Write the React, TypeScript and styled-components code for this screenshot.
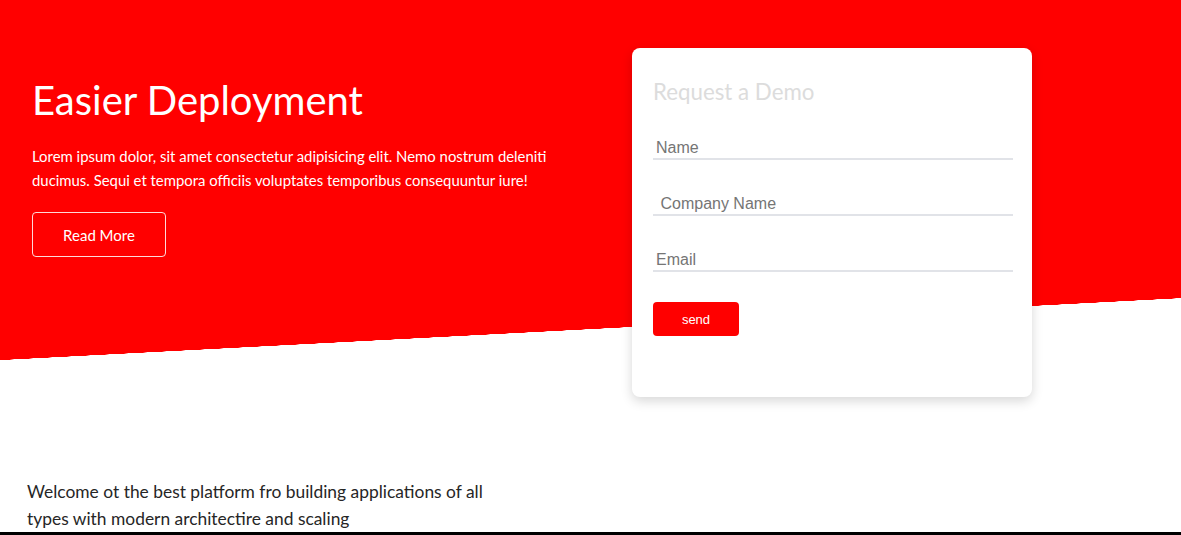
import * as React from 'react'
import styled, { createGlobalStyle } from 'styled-components'

const GlobalStyle = createGlobalStyle`
  html, body {
    margin: 0;
    padding: 0;
    background: #fff;
    font-family: Lato, "Open Sans", sans-serif;
  }
  * { box-sizing: border-box; }
`

const RED = '#ff0000'

const Hero = styled.section`
  height: 360px;
  display: flex;
  justify-content: space-between;
  align-items: flex-start;
  padding: 0 149px 0 32px;
  background:
    linear-gradient(${ RED }, ${ RED }) top / 100% 298px no-repeat,
    linear-gradient(to bottom right, ${ RED } 50%, transparent 50.2%) 0 298px / 100% 62px no-repeat;
`

const Intro = styled.div`
  width: 540px;
  padding-top: 76px;
  color: #fff;
`

const Title = styled.h1`
  margin: 0;
  font-size: 40px;
  font-weight: 400;
  line-height: 48px;
`

const Lead = styled.p`
  margin: 20px 0 20px;
  font-size: 14.9px;
  line-height: 24px;
`

const OutlineButton = styled.button`
  width: 134px;
  height: 45px;
  background: transparent;
  border: 1px solid rgba(255, 255, 255, 0.85);
  border-radius: 4px;
  color: #fff;
  font-family: Lato, sans-serif;
  font-size: 15px;
  cursor: pointer;
`

const Card = styled.div`
  width: 400px;
  height: 349px;
  margin-top: 48px;
  padding: 20px 19px 20px 21px;
  background: #fff;
  border-radius: 8px;
  box-shadow: 0 4px 12px rgba(0, 0, 0, 0.16);
`

const CardTitle = styled.h3`
  margin: 11px 0 23px 0;
  font-size: 22.3px;
  font-weight: 400;
  line-height: 26px;
  color: #dcdcdc;
`

const Form = styled.form`
  display: flex;
  flex-direction: column;
  gap: 24px;
`

const Input = styled.input`
  width: 360px;
  height: 32px;
  padding: 10px 3px 1px;
  border: none;
  border-bottom: 2px solid #e1e3e8;
  outline: none;
  font-family: "Liberation Sans", Arial, sans-serif;
  font-size: 16px;
  color: #333;
  &::placeholder { color: #757575; }
`

const SendButton = styled.button`
  width: 86px;
  height: 34px;
  margin-top: 6px;
  border: none;
  border-radius: 4px;
  background: ${ RED };
  color: #fff;
  font-family: "Liberation Sans", Arial, sans-serif;
  font-size: 13px;
  cursor: pointer;
`

const Welcome = styled.section`
  padding: 118px 0 0 27px;
`

const WelcomeText = styled.p`
  margin: 0;
  width: 480px;
  font-size: 17.4px;
  line-height: 27px;
  color: #262626;
`

const Footer = styled.footer`
  height: 3px;
  background: #000;
`

export default function App() {
  return (
    <>
      <GlobalStyle/>
      <Hero>
        <Intro>
          <Title>Easier Deployment</Title>
          <Lead>
            Lorem ipsum dolor, sit amet consectetur adipisicing elit. Nemo nostrum deleniti
            ducimus. Sequi et tempora officiis voluptates temporibus consequuntur iure!
          </Lead>
          <OutlineButton>Read More</OutlineButton>
        </Intro>
        <Card>
          <CardTitle>Request a Demo</CardTitle>
          <Form onSubmit={ e => e.preventDefault() }>
            <Input placeholder="Name"/>
            <Input placeholder=" Company Name"/>
            <Input placeholder="Email"/>
            <div>
              <SendButton type="submit">send</SendButton>
            </div>
          </Form>
        </Card>
      </Hero>
      <Welcome>
        <WelcomeText>
          Welcome ot the best platform fro building applications of all types with modern architectire and scaling
        </WelcomeText>
      </Welcome>
      <Footer/>
    </>
  )
}
